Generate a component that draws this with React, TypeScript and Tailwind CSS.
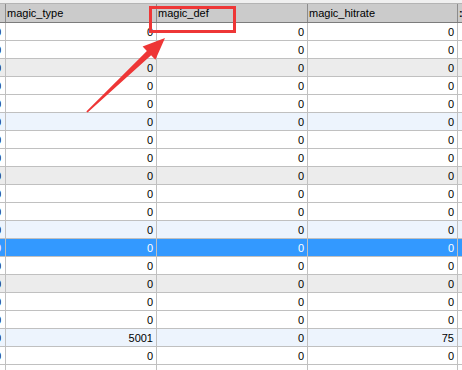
import React from "react";

type RowKind = "white" | "gray" | "blue" | "selected";

type Row = {
  kind: RowKind;
  values: [string, string, string];
};

const kinds: RowKind[] = [
  "white", "white", "gray", "white", "white", "blue",
  "white", "white", "gray", "white", "white", "blue",
  "selected", "white", "gray", "white", "white", "blue",
  "white", "white",
];

const rows: Row[] = kinds.map((kind, i) => ({
  kind,
  values: i === 17 ? ["5001", "0", "75"] : ["0", "0", "0"],
}));

const rowBg: Record<RowKind, string> = {
  white: "bg-white text-black",
  gray: "bg-[#ececec] text-black",
  blue: "bg-[#edf4fd] text-black",
  selected: "bg-[#3399ff] text-white",
};

function HeaderCell({ label, width }: { label: string; width: string }) {
  return (
    <div
      className={`${width} shrink-0 h-full border-r border-[#8c8c8c] pl-[1px] leading-[18px] whitespace-nowrap overflow-hidden`}
    >
      {label}
    </div>
  );
}

export default function App() {
  return (
    <div
      className="relative w-[462px] h-[370px] overflow-hidden bg-white text-[11px]"
      style={{ fontFamily: '"Liberation Sans", Arial, sans-serif' }}
    >
      {/* top strip above the header */}
      <div className="h-[3px] bg-[#f0f0f0] border-b border-[#b4b4b4] box-content" />

      {/* header */}
      <div className="flex h-[19px] bg-[#cbcbcb] border-b border-[#7c7c7c] text-black">
        <div className="w-[6px] shrink-0 h-full border-r border-[#8c8c8c]" />
        <HeaderCell label="magic_type" width="w-[151px]" />
        <HeaderCell label="magic_def" width="w-[151px]" />
        <HeaderCell label="magic_hitrate" width="w-[150px]" />
        <div className="flex-1 pl-[1px] leading-[18px] overflow-hidden font-bold">:</div>
      </div>

      {/* body rows */}
      <div className="flex flex-col">
        {rows.map((row, i) => (
          <div
            key={i}
            className={`flex h-[18px] shrink-0 border-b border-[#c0c0c0] ${rowBg[row.kind]}`}
          >
            <div className="w-[6px] shrink-0 border-r border-[#c0c0c0] overflow-hidden flex justify-end leading-[19px]">
              <span className="pr-[4px]">0</span>
            </div>
            {row.values.map((v, j) => (
              <div
                key={j}
                className={`${j === 2 ? "w-[150px]" : "w-[151px]"} shrink-0 border-r border-[#c0c0c0] text-right pr-[3px] leading-[19px] overflow-hidden`}
              >
                {v}
              </div>
            ))}
            <div className="flex-1" />
          </div>
        ))}
      </div>

      {/* red annotation: box around magic_def and arrow */}
      <div className="absolute left-[149px] top-[6px] w-[87px] h-[27px] border-[3px] border-[#ee3636]" />
      <svg
        className="absolute left-0 top-0"
        width="462"
        height="370"
        viewBox="0 0 462 370"
      >
        <polygon
          points="86.3,111.4 146.9,50.9 142.6,46.4 165,38 155.4,59.8 151.1,55.3 87.6,112.6"
          fill="#ee3636"
        />
      </svg>
    </div>
  );
}
